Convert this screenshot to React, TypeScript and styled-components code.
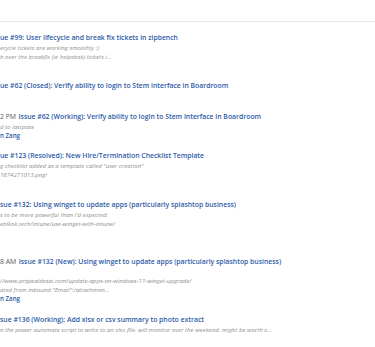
import React from 'react';
import styled, { createGlobalStyle } from 'styled-components';

type Entry = {
  time?: string;
  title: string;
  lines: string[];
  author?: string;
};

const entries: Entry[] = [
  {
    title: 'ue #99: User lifecycle and break fix tickets in zipbench',
    lines: ['ecycle tickets are working smoothly :)', 'h over the breakfix (ie helpdesk) tickets i...', ''],
  },
  {
    title: 'ue #62 (Closed): Verify ability to login to Stem interface in Boardroom',
    lines: [''],
  },
  {
    time: '2 PM',
    title: 'Issue #62 (Working): Verify ability to login to Stem interface in Boardroom',
    lines: ['d to lastpass'],
    author: 'n Zang',
  },
  {
    title: 'ue #123 (Resolved): New Hire/Termination Checklist Template',
    lines: ['g checklist added as a template called "user creation"', '1674271013.png!', ''],
  },
  {
    title: 'sue #132: Using winget to update apps (particularly splashtop business)',
    lines: ["s to be more powerful than I'd expected:", 'eblkok.tech/intune/use-winget-with-intune/', '', ''],
  },
  {
    time: '8 AM',
    title: 'Issue #132 (New): Using winget to update apps (particularly splashtop business)',
    lines: [
      '',
      '//www.prajwaldesai.com/update-apps-on-windows-11-winget-upgrade/',
      'ated from inbound "Email":/attachmen...',
    ],
    author: 'n Zang',
  },
  {
    title: 'sue #136 (Working): Add xlsx or csv summary to photo extract',
    lines: ['n the power automate script to write to an xlsx file. will monitor over the weekend. might be worth s...'],
  },
];

export default function App() {
  return (
    <>
      <GlobalStyle />
      <Page>
        <Divider />
        <Stream>
          {entries.map((e, i) => (
            <Item key={i}>
              <TitleRow>
                {e.time && <Time>{e.time}</Time>}
                <TitleLink>{e.title}</TitleLink>
              </TitleRow>
              {e.lines.map((l, j) => (
                <Excerpt key={j}>{l || '\u00a0'}</Excerpt>
              ))}
              {e.author && <Author>{e.author}</Author>}
            </Item>
          ))}
        </Stream>
      </Page>
    </>
  );
}

const GlobalStyle = createGlobalStyle`
  html, body {
    margin: 0;
    padding: 0;
    background: #fff;
  }
  body {
    font-family: "Open Sans", "Noto Sans", sans-serif;
  }
`;

const Page = styled.div`
  width: 375px;
  height: 347px;
  overflow: hidden;
  padding-top: 21px;
  box-sizing: border-box;
`;

const Divider = styled.div`
  height: 1px;
  background: #e6e6e6;
`;

const Stream = styled.div`
  display: flex;
  flex-direction: column;
  gap: 11.5px;
  padding-top: 10.5px;
`;

const Item = styled.div`
  display: flex;
  flex-direction: column;
`;

const TitleRow = styled.div`
  display: flex;
  gap: 2.5px;
  height: 10px;
  line-height: 10px;
  font-size: 6.85px;
  white-space: nowrap;
`;

const Time = styled.span`
  color: #5a5a5a;
`;

const TitleLink = styled.span`
  color: #2d5ba8;
  font-weight: 600;
`;

const Excerpt = styled.div`
  height: 9px;
  line-height: 9px;
  font-size: 6.1px;
  font-style: italic;
  color: #8f8f8f;
  white-space: nowrap;
`;

const Author = styled.div`
  height: 9px;
  line-height: 9px;
  font-size: 6.2px;
  font-weight: 600;
  color: #2d5ba8;
  white-space: nowrap;
`;
